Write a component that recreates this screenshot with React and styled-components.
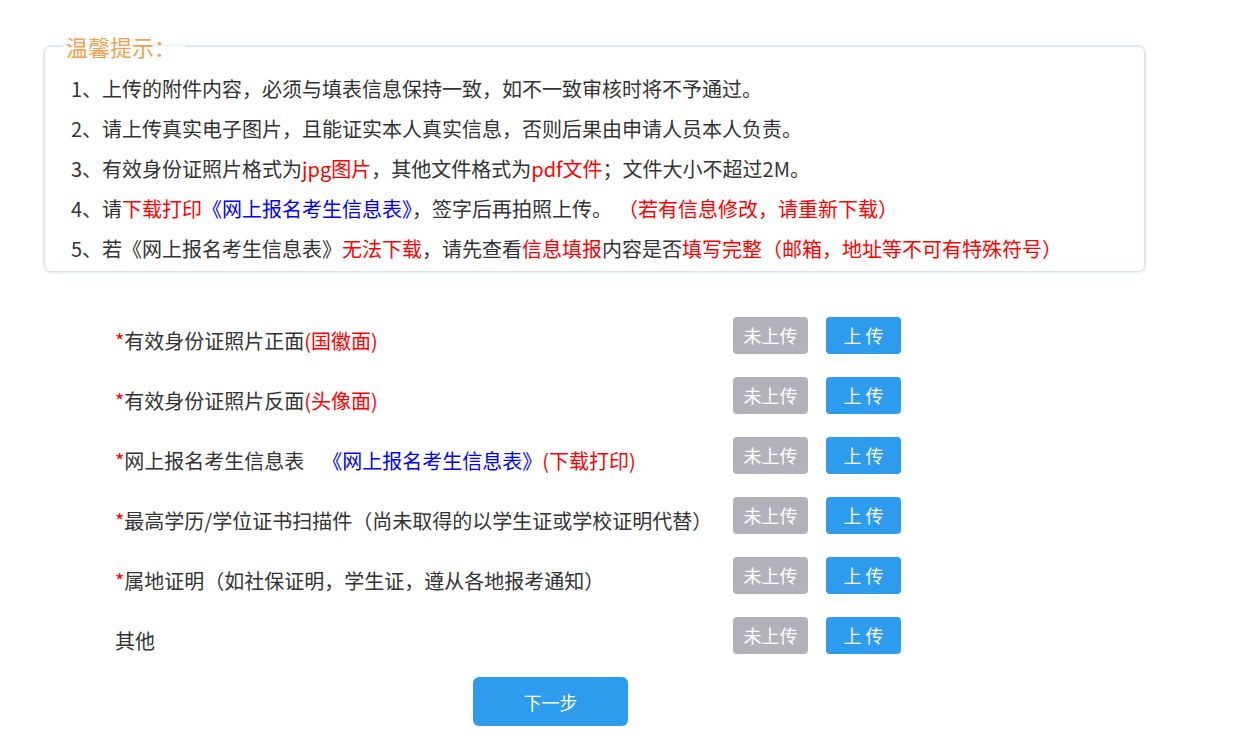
import React from 'react';
import styled, { createGlobalStyle } from 'styled-components';

const GlobalStyle = createGlobalStyle`
    body {
        margin: 0;
        background: #fff;
        color: #333;
        font-family: "Microsoft YaHei", "Noto Sans CJK SC", "Noto Sans", sans-serif;
    }
`;

const Page = styled.div`
    padding: 35px 0 16px 44px;
`;

const Notice = styled.fieldset`
    box-sizing: border-box;
    width: 1101px;
    margin: 0;
    padding: 12px 0 2px 17px;
    border: 1px solid #d6e1ed;
    border-radius: 7px;
    box-shadow: 0 0 3px 1px #e3ebf4;
`;

const Legend = styled.legend`
    padding: 0 10px 0 4px;
    font-size: 22px;
    line-height: 22px;
    color: #f3a04f;
`;

const Tip = styled.p`
    margin: 0;
    padding-left: 9px;
    font-size: 20px;
    line-height: 40px;
`;

const Red = styled.span`
    color: #ff0000;
    margin-left: ${(p) => (p.$gap ? '16px' : '0')};
`;

const Blue = styled.span`
    color: #0000ff;
    margin-left: ${(p) => (p.$gap ? '18px' : '0')};
`;

const Form = styled.div`
    margin-top: 45px;
    padding-left: 71px;
`;

const Row = styled.div`
    display: flex;
    align-items: flex-start;
    height: 60px;
`;

const Label = styled.div`
    width: 618px;
    margin-top: 4px;
    font-size: 20px;
    line-height: 40px;
    white-space: nowrap;
`;

const Star = styled.span`
    color: #ff0000;
`;

const SmallButton = styled.button`
    width: 75px;
    height: 37px;
    margin-left: ${(p) => (p.$primary ? '18px' : '0')};
    padding: 0;
    border: none;
    border-radius: 4px;
    background: ${(p) => (p.$primary ? '#2d9cee' : '#b2b1b9')};
    color: #fff;
    font-family: inherit;
    font-size: 18px;
    line-height: 37px;
    cursor: pointer;
`;

const Footer = styled.div`
    padding-left: 429px;
`;

const NextButton = styled.button`
    width: 155px;
    height: 49px;
    border: none;
    border-radius: 6px;
    background: #2d9cee;
    color: #fff;
    font-family: inherit;
    font-size: 18px;
    cursor: pointer;
`;

const rows = [
    { required: true, label: <>有效身份证照片正面<Red>(国徽面)</Red></> },
    { required: true, label: <>有效身份证照片反面<Red>(头像面)</Red></> },
    {
        required: true,
        label: (
            <>
                网上报名考生信息表<Blue $gap>《网上报名考生信息表》</Blue>
                <Red>(下载打印)</Red>
            </>
        ),
    },
    { required: true, label: '最高学历/学位证书扫描件（尚未取得的以学生证或学校证明代替）' },
    { required: true, label: '属地证明（如社保证明，学生证，遵从各地报考通知）' },
    { required: false, label: '其他' },
];

const App = () => (
    <Page>
        <GlobalStyle />
        <Notice>
            <Legend>温馨提示：</Legend>
            <Tip>1、上传的附件内容，必须与填表信息保持一致，如不一致审核时将不予通过。</Tip>
            <Tip>2、请上传真实电子图片，且能证实本人真实信息，否则后果由申请人员本人负责。</Tip>
            <Tip>
                3、有效身份证照片格式为<Red>jpg图片</Red>，其他文件格式为<Red>pdf文件</Red>；文件大小不超过2M。
            </Tip>
            <Tip>
                4、请<Red>下载打印</Red><Blue>《网上报名考生信息表》</Blue>，签字后再拍照上传。
                <Red $gap>（若有信息修改，请重新下载）</Red>
            </Tip>
            <Tip>
                5、若《网上报名考生信息表》<Red>无法下载</Red>，请先查看<Red>信息填报</Red>内容是否
                <Red>填写完整（邮箱，地址等不可有特殊符号）</Red>
            </Tip>
        </Notice>

        <Form>
            {rows.map((row, i) => (
                <Row key={i}>
                    <Label>
                        {row.required && <Star>*</Star>}
                        {row.label}
                    </Label>
                    <SmallButton>未上传</SmallButton>
                    <SmallButton $primary>上 传</SmallButton>
                </Row>
            ))}
        </Form>

        <Footer>
            <NextButton>下一步</NextButton>
        </Footer>
    </Page>
);

export default App;
